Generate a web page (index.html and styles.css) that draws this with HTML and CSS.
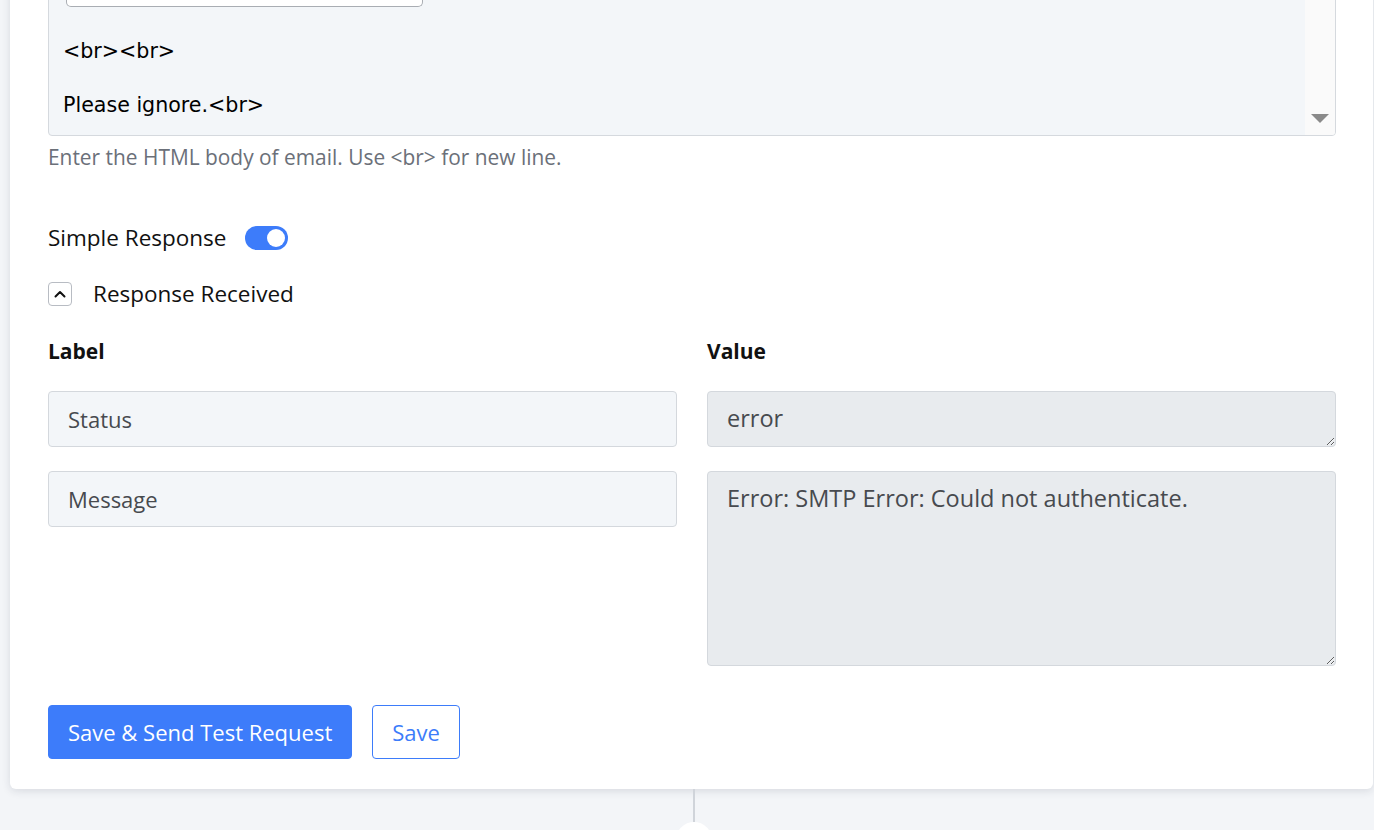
FILE: index.html
```html
<!DOCTYPE html>
<html lang="en">
<head>
<meta charset="utf-8">
<title>Email action</title>
<link rel="stylesheet" href="styles.css">
</head>
<body>
<div class="page">
  <section class="card">
    <div class="editor">
      <div class="editor-body">
        <div class="embed-box"></div>
        <div class="code-line">&lt;br&gt;&lt;br&gt;</div>
        <div class="code-line">&nbsp;</div>
        <div class="code-line">Please ignore.&lt;br&gt;</div>
      </div>
      <div class="editor-scroll"><span class="scroll-arrow"></span></div>
    </div>
    <p class="hint">Enter the HTML body of email. Use &lt;br&gt; for new line.</p>

    <div class="toggle-row">
      <span class="row-label">Simple Response</span>
      <span class="switch"><span class="knob"></span></span>
    </div>

    <div class="collapse-row">
      <button class="chevron-btn" type="button" aria-label="Collapse">
        <svg width="12" height="8" viewBox="0 0 12 8"><path d="M1.5 6.5 L6 2 L10.5 6.5" fill="none" stroke="#111" stroke-width="2" stroke-linecap="round" stroke-linejoin="round"/></svg>
      </button>
      <span class="row-label">Response Received</span>
    </div>

    <div class="response-grid">
      <div class="col-head">Label</div>
      <div class="col-head">Value</div>
      <input class="field" type="text" value="Status" readonly>
      <textarea class="value-box short" readonly>error</textarea>
      <input class="field" type="text" value="Message" readonly>
      <textarea class="value-box tall" readonly>Error: SMTP Error: Could not authenticate.</textarea>
    </div>

    <div class="actions">
      <button class="btn btn-primary" type="button">Save &amp; Send Test Request</button>
      <button class="btn btn-outline" type="button">Save</button>
    </div>
  </section>
  <div class="connector"></div>
  <div class="add-node"></div>
</div>
</body>
</html>
```

FILE: styles.css
```css
html, body {
  margin: 0;
  padding: 0;
  background: #f3f5f8;
  overflow: hidden;
}

.page {
  width: 1374px;
  height: 830px;
  overflow: hidden;
  font-family: "Open Sans", sans-serif;
  color: #111;
}

.card {
  margin: -57px 1px 0 10px;
  padding: 30px 37px 30px 38px;
  background: #fff;
  border-radius: 0 0 6px 6px;
  box-shadow: 0 2px 8px rgba(30, 40, 60, 0.13);
}

/* HTML body editor */
.editor {
  display: flex;
  background: #f3f6f9;
  border: 1px solid #d5d9de;
  border-radius: 4px;
  overflow: hidden;
}

.editor-body {
  flex: 1;
  padding: 0 0 16px 14px;
  font-family: "DejaVu Sans", sans-serif;
  font-size: 20.6px;
  color: #000;
}

.embed-box {
  width: 355px;
  height: 33px;
  margin: -1px 0 0 3px;
  background: #fff;
  border: 1px solid #a9adb3;
  border-radius: 0 0 5px 5px;
  border-top: none;
}

.code-line {
  line-height: 27px;
  height: 27px;
}

.embed-box + .code-line {
  margin-top: 31px;
}

.editor-scroll {
  width: 30px;
  background: #fafafa;
  display: flex;
  align-items: flex-end;
  justify-content: center;
  padding-bottom: 12px;
}

.scroll-arrow {
  width: 0;
  height: 0;
  border-left: 9px solid transparent;
  border-right: 9px solid transparent;
  border-top: 9px solid #8a8a8a;
}

.hint {
  margin: 9px 0 0;
  font-size: 20.9px;
  line-height: 24px;
  color: #6b7079;
}

.toggle-row {
  display: flex;
  align-items: center;
  gap: 19px;
  margin-top: 57px;
  height: 24px;
}

.row-label {
  font-size: 22.5px;
  line-height: 24px;
  color: #111;
}

.switch {
  width: 43px;
  height: 24px;
  border-radius: 12px;
  background: #3d7cfa;
  display: flex;
  align-items: center;
  justify-content: flex-end;
  padding-right: 3px;
  box-sizing: border-box;
}

.knob {
  width: 18px;
  height: 18px;
  border-radius: 50%;
  background: #fff;
}

.collapse-row {
  display: flex;
  align-items: center;
  gap: 21px;
  margin-top: 32px;
}

.chevron-btn {
  width: 24px;
  height: 24px;
  padding: 0;
  border: 1px solid #b8bcc3;
  border-radius: 4px;
  background: #fff;
  display: flex;
  align-items: center;
  justify-content: center;
}

/* label / value table */
.response-grid {
  display: grid;
  grid-template-columns: 1fr 1fr;
  column-gap: 30px;
  row-gap: 24px;
  margin-top: 33px;
  align-items: start;
}

.col-head {
  font-size: 21px;
  font-weight: 700;
  line-height: 24px;
  margin-bottom: 4px;
}

.field,
.value-box {
  box-sizing: border-box;
  width: 100%;
  margin: 0;
  border: 1px solid #d4d8dd;
  border-radius: 4px;
  font-family: "Open Sans", sans-serif;
  color: #474a4f;
  outline: none;
}

.field {
  height: 56px;
  padding: 0 19px;
  font-size: 22px;
  background: #f3f6f9;
}

.value-box {
  display: block;
  padding: 10px 19px;
  font-size: 23.5px;
  line-height: 32px;
  background: #e8ebee;
  resize: vertical;
}

.value-box.short {
  height: 56px;
}

.value-box.tall {
  height: 195px;
}

.actions {
  display: flex;
  gap: 20px;
  margin-top: 39px;
}

.btn {
  height: 54px;
  border-radius: 4px;
  font-family: "Open Sans", sans-serif;
  font-size: 22px;
  padding: 0 19px;
}

.btn-primary {
  background: #3d7cfa;
  color: #fff;
  border: 1px solid #3d7cfa;
}

.btn-outline {
  background: #fff;
  color: #3d7cfa;
  border: 1px solid #3d7cfa;
}

/* flow connector below the step card */
.connector {
  width: 2px;
  height: 33px;
  margin-left: 693px;
  background: #d0d4da;
}

.add-node {
  width: 36px;
  height: 36px;
  margin-left: 676px;
  border-radius: 50%;
  background: #fff;
}
```
